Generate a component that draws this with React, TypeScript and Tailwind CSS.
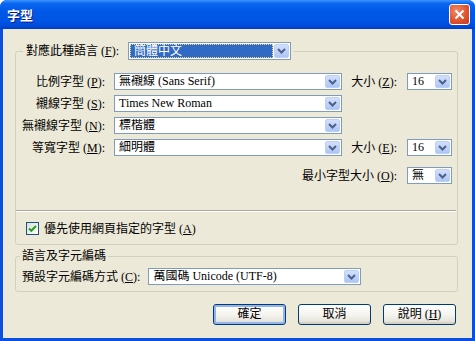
import type { ReactNode } from "react";

function Chevron() {
  return (
    <svg width="9" height="6" viewBox="0 0 9 6">
      <path d="M1 1l3.5 3.5L8 1" fill="none" stroke="#4d6185" strokeWidth="2" />
    </svg>
  );
}

function DropButton() {
  return (
    <span className="flex h-full w-[15px] shrink-0 items-center justify-center rounded-[2px] border border-[#bccff7] bg-gradient-to-b from-[#d3e0fd] to-[#adc5f6]">
      <Chevron />
    </span>
  );
}

function Combo({ width, children }: { width: string; children: ReactNode }) {
  return (
    <div className={`flex h-[17px] items-stretch border border-[#7f9db9] bg-white p-px ${width}`}>
      <span className="flex flex-1 items-center overflow-hidden whitespace-nowrap pl-[3px] leading-[13px]">
        {children}
      </span>
      <DropButton />
    </div>
  );
}

function Key({ k }: { k: string }) {
  return (
    <>
      {" "}(<u>{k}</u>):
    </>
  );
}

function FontRow({
  label,
  k,
  value,
  size,
}: {
  label: string;
  k: string;
  value: ReactNode;
  size?: { label: string; k: string };
}) {
  return (
    <div className="flex h-[17px] items-center">
      <span className="w-[98px] whitespace-nowrap pr-[9px] text-right">
        {label}
        <Key k={k} />
      </span>
      <Combo width="w-[228px]">{value}</Combo>
      {size && (
        <>
          <span className="w-[65px] whitespace-nowrap pr-[10px] text-right">
            {size.label}
            <Key k={size.k} />
          </span>
          <Combo width="w-[45px]">16</Combo>
        </>
      )}
    </div>
  );
}

function Button({ children, isDefault }: { children: ReactNode; isDefault?: boolean }) {
  return (
    <button
      className={`flex h-[21px] w-[73px] items-center justify-center rounded-[3px] border border-[#003c74] bg-gradient-to-b from-white via-[#f5f4ef] to-[#e0ded4] leading-[13px] ${
        isDefault ? "shadow-[inset_0_0_0_2px_#93b3ee]" : "shadow-[inset_0_-2px_0_#d6d0c5]"
      }`}
    >
      {children}
    </button>
  );
}

export default function App() {
  return (
    <div className="flex h-[341px] w-[475px] flex-col overflow-hidden rounded-t-[7px] bg-[#0a4fdf] font-['Liberation_Serif','Noto_Sans_CJK_TC',serif] text-[12px] leading-[14px] text-black">
      {/* title bar */}
      <div className="flex h-[29px] shrink-0 items-center justify-between bg-[linear-gradient(to_bottom,#3d95ff_0%,#0a66f0_12%,#0058e6_40%,#0054e3_75%,#0048d6_92%,#003cc8_100%)] pl-[7px] pr-[5px]">
        <span className="font-['Noto_Sans_CJK_TC',sans-serif] text-[13px] font-bold leading-[16px] text-white [text-shadow:1px_1px_0_#0a1a84]">
          字型
        </span>
        <span className="flex h-[21px] w-[21px] items-center justify-center rounded-[3px] border border-white bg-[radial-gradient(circle_at_35%_30%,#f08a6a_0%,#e0542f_55%,#c4391a_100%)]">
          <svg width="11" height="11" viewBox="0 0 11 11">
            <path d="M1.5 1.5l8 8M9.5 1.5l-8 8" stroke="white" strokeWidth="2" />
          </svg>
        </span>
      </div>

      {/* client area */}
      <div className="mx-[3px] mb-[3px] flex flex-1 flex-col bg-[#ece9d8]">
        <fieldset className="ml-[12px] mt-[13px] w-[443px] rounded-[3px] border border-[#d0d0bf] pb-[9px]">
          <legend className="ml-[7px] px-[3px]">
            <div className="flex items-center">
              <span className="whitespace-nowrap">
                對應此種語言
                <Key k="F" />
              </span>
              <div className="ml-[9px] flex h-[18px] w-[163px] items-stretch border border-[#7f9db9] bg-white p-px">
                <span className="mr-px flex flex-1 items-center border border-dotted border-[#f7d77a] bg-[#316ac5] pl-[3px] text-white">
                  簡體中文
                </span>
                <DropButton />
              </div>
            </div>
          </legend>

          <div className="mt-[13px] flex flex-col gap-[5px]">
            <FontRow
              label="比例字型"
              k="P"
              value="無襯線 (Sans Serif)"
              size={{ label: "大小", k: "Z" }}
            />
            <FontRow label="襯線字型" k="S" value="Times New Roman" />
            <FontRow label="無襯線字型" k="N" value="標楷體" />
            <FontRow label="等寬字型" k="M" value="細明體" size={{ label: "大小", k: "E" }} />
          </div>

          <div className="mt-[11px] flex h-[17px] items-center justify-end pr-[5px]">
            <span className="whitespace-nowrap pr-[10px]">
              最小字型大小
              <Key k="O" />
            </span>
            <Combo width="w-[45px]">無</Combo>
          </div>

          <div className="mr-px mt-[26px] border-b border-t border-b-white border-t-[#aca899]" />

          <div className="ml-[10px] mt-[10px] flex h-[13px] items-center gap-[5px]">
            <span className="flex h-[13px] w-[13px] items-center justify-center border border-[#1c5180] bg-gradient-to-br from-[#dcdcd7] to-white">
              <svg width="9" height="9" viewBox="0 0 9 9">
                <path d="M1 4.5l2.3 2.3L8 2" fill="none" stroke="#21a121" strokeWidth="2" />
              </svg>
            </span>
            <span className="whitespace-nowrap">
              優先使用網頁指定的字型 (<u>A</u>)
            </span>
          </div>
        </fieldset>

        <fieldset className="ml-[12px] mt-[4px] w-[443px] rounded-[3px] border border-[#d0d0bf] pb-[6px]">
          <legend className="ml-[4px] px-[2px] leading-[14px]">語言及字元編碼</legend>
          <div className="mt-[5px] flex h-[17px] items-center pl-[6px]">
            <span className="whitespace-nowrap pr-[8px]">
              預設字元編碼方式
              <Key k="C" />
            </span>
            <Combo width="w-[213px]">萬國碼 Unicode (UTF-8)</Combo>
          </div>
        </fieldset>

        <div className="mt-[12px] flex justify-end gap-[12px] pr-[16px]">
          <Button isDefault>確定</Button>
          <Button>取消</Button>
          <Button>
            說明 (<u>H</u>)
          </Button>
        </div>
      </div>
    </div>
  );
}
